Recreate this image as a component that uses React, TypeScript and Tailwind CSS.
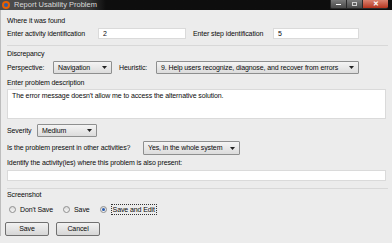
import React from 'react';

function Caret() {
  return (
    <svg width="5" height="3" viewBox="0 0 5 3" className="shrink-0">
      <path d="M0 0 H5 L2.5 3 Z" fill="#222" />
    </svg>
  );
}

function Dropdown({ value, className }: { value: string; className: string }) {
  return (
    <div
      className={`flex h-[13px] items-center justify-between rounded-[1px] border border-[#8e8f8f] bg-gradient-to-b from-[#f4f4f4] to-[#dcdcdc] pl-[4px] pr-[4px] ${className}`}
    >
      <span className="whitespace-nowrap">{value}</span>
      <Caret />
    </div>
  );
}

function Radio({ label, checked, focus }: { label: string; checked?: boolean; focus?: boolean }) {
  return (
    <div className="flex items-center gap-[4px]">
      <span className="flex h-[7px] w-[7px] items-center justify-center rounded-full border border-[#8f8f8f] bg-gradient-to-b from-[#dcdcdc] to-[#f6f6f6]">
        {checked && <span className="h-[3px] w-[3px] rounded-full bg-[#2a5db0]" />}
      </span>
      <span className={focus ? 'border border-dotted border-[#333] px-[1px] leading-[9px]' : 'leading-[9px]'}>
        {label}
      </span>
    </div>
  );
}

function Button({ label }: { label: string }) {
  return (
    <div className="flex h-[14px] w-[44px] items-center justify-center rounded-[2px] border border-[#707070] bg-gradient-to-b from-[#f2f2f2] to-[#d6d6d6]">
      {label}
    </div>
  );
}

export default function App() {
  return (
    <div
      className="h-[243px] w-[392px] overflow-hidden whitespace-nowrap bg-[#ececec] text-[7px] leading-[8px] tracking-[-0.1px] text-[#0a0a0a]"
      style={{ fontFamily: '"Liberation Sans", Arial, sans-serif' }}
    >
      {/* title bar */}
      <div className="flex h-[10px] items-center bg-gradient-to-r from-[#4d4d4d] via-[#3e3e3e] via-22% to-[#0e0e0e] to-27%">
        <span className="ml-[2px] flex h-[8px] w-[8px] items-center justify-center rounded-full bg-[#e66000]">
          <span className="h-[4px] w-[4px] rounded-full bg-[#2d5fa8]" />
        </span>
        <span className="ml-[4px] text-[7.5px] tracking-normal text-[#d8d8d8]">Report Usability Problem</span>
        <div className="ml-auto flex h-[9px] self-start">
          <div className="flex w-[16px] items-center justify-center rounded-bl-[2px] border-b border-l border-[#2a2a2a] bg-gradient-to-b from-[#7a7a7a] to-[#4a4a4a]">
            <span className="h-[1px] w-[5px] bg-white" />
          </div>
          <div className="flex w-[16px] items-center justify-center border-b border-l border-[#2a2a2a] bg-gradient-to-b from-[#7a7a7a] to-[#4a4a4a]">
            <span className="h-[4px] w-[5px] border border-[#cfcfcf]" />
          </div>
          <div className="flex w-[26px] items-center justify-center rounded-br-[2px] border-b border-l border-[#2a2a2a] bg-gradient-to-b from-[#d9826f] to-[#b4321c] text-[7px] font-bold text-white">
            ✕
          </div>
          <div className="w-[4px] bg-[#0e0e0e]" />
        </div>
      </div>

      <div className="flex flex-col border-l border-[#bdbdbd] pl-[6px]">
        <div className="mt-[7px] h-[8px]">Where it was found</div>

        <div className="mt-[3px] flex h-[11px] items-center">
          <span className="w-[91px]">Enter activity identification</span>
          <div className="flex h-[11px] w-[88px] items-center border border-[#dadada] bg-white pl-[4px]">2</div>
          <span className="ml-[7px] w-[80px]">Enter step identification</span>
          <div className="flex h-[11px] w-[86px] items-center border border-[#dadada] bg-white pl-[4px]">5</div>
        </div>

        <div className="mt-[6px] mr-[4px] h-[1px] bg-[#d8d8d8]" />

        <div className="mt-[4px] h-[8px]">Discrepancy</div>

        <div className="mt-[3px] flex items-center">
          <span className="w-[46px]">Perspective:</span>
          <Dropdown value="Navigation" className="w-[59px]" />
          <span className="ml-[7px] w-[37px]">Heuristic:</span>
          <Dropdown value="9. Help users recognize, diagnose, and recover from errors" className="w-[203px]" />
        </div>

        <div className="mt-[5px] h-[8px]">Enter problem description</div>
        <div className="mt-[2px] h-[30px] w-[379px] border border-[#dadada] bg-white px-[4px] pt-[2px]">
          The error message doesn't allow me to access the alternative solution.
        </div>

        <div className="mt-[5px] flex items-center">
          <span className="w-[30px]">Severity</span>
          <Dropdown value="Medium" className="w-[60px]" />
        </div>

        <div className="mt-[4px] flex items-center">
          <span className="w-[136px]">Is the problem present in other activities?</span>
          <Dropdown value="Yes, in the whole system" className="h-[14px] w-[97px]" />
        </div>

        <div className="mt-[4px] h-[8px]">Identify the activity(ies) where this problem is also present:</div>
        <div className="mt-[3px] h-[11px] w-[379px] border border-[#dadada] bg-white" />

        <div className="mt-[7px] mr-[4px] h-[1px] bg-[#d8d8d8]" />

        <div className="mt-[2px] h-[8px]">Screenshot</div>

        <div className="mt-[5px] flex h-[10px] items-center pl-[2px]">
          <Radio label="Don't Save" />
          <div className="w-[10px]" />
          <Radio label="Save" />
          <div className="w-[10px]" />
          <Radio label="Save and Edit" checked focus />
        </div>

        <div className="mt-[8px] flex gap-[7px]">
          <div className="-ml-[2px]">
            <Button label="Save" />
          </div>
          <Button label="Cancel" />
        </div>
      </div>
    </div>
  );
}
